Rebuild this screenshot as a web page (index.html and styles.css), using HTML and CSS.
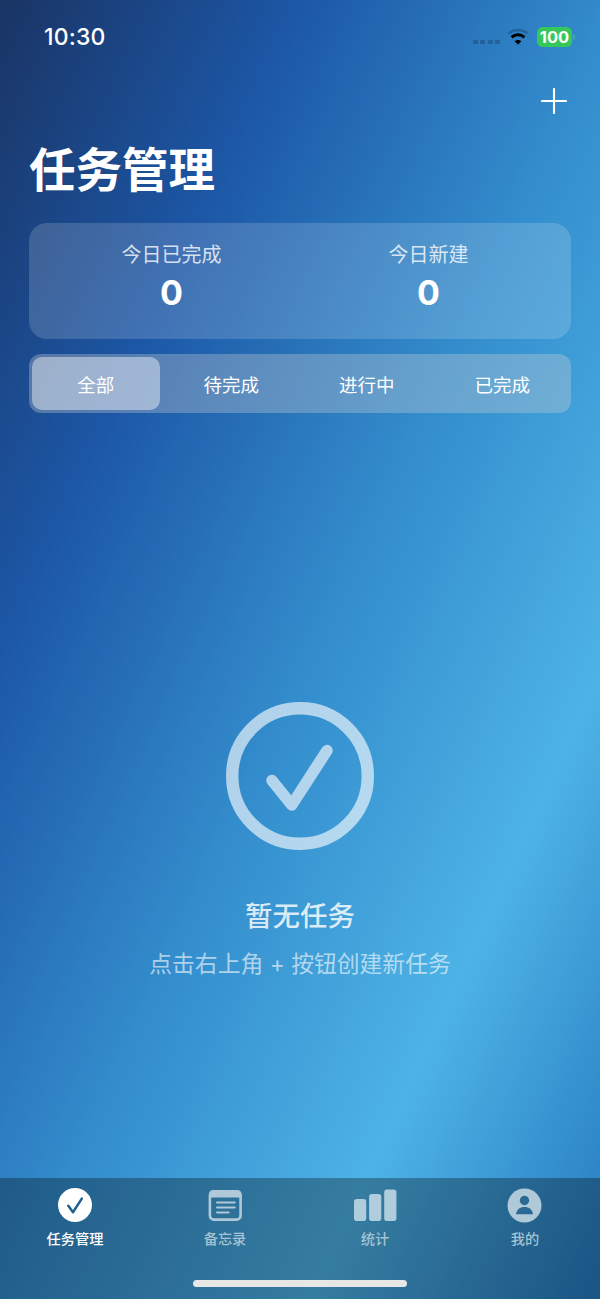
FILE: index.html
```
<!DOCTYPE html>
<html lang="zh-CN">
<head>
<meta charset="utf-8">
<title>任务管理</title>
<link rel="stylesheet" href="styles.css">
</head>
<body>
<div class="screen">
  <header class="status">
    <span class="time">10:30</span>
    <div class="indicators">
      <span class="cell"><i></i><i></i><i></i><i></i></span>
      <svg class="wifi" width="22" height="18" viewBox="0 0 22 18" fill="none">
        <path d="M1.500 5.400C7 .8 15 .8 20.500 5.400" stroke="#24649f" stroke-width="2.600"/>
        <path d="M4.600 9.300C8.200 5.900 13.800 5.900 17.400 9.300" stroke="#000" stroke-width="3"/>
        <path d="M11 16.500L7.600 13.200C9.500 11.500 12.500 11.500 14.400 13.200Z" fill="#000"/>
      </svg>
      <span class="battery">100</span><span class="battery-tip"></span>
    </div>
  </header>
  <div class="toolbar">
    <svg width="26" height="26" viewBox="0 0 26 26"><path d="M13 1v24M1 13h24" stroke="#fff" stroke-width="2.100" stroke-linecap="round"/></svg>
  </div>
  <h1 class="title">任务管理</h1>
  <section class="stats">
    <div class="stat"><span class="stat-label">今日已完成</span><strong class="stat-value">0</strong></div>
    <div class="stat"><span class="stat-label">今日新建</span><strong class="stat-value">0</strong></div>
  </section>
  <nav class="segments">
    <span class="segment active">全部</span>
    <span class="segment">待完成</span>
    <span class="segment">进行中</span>
    <span class="segment">已完成</span>
  </nav>
  <main class="empty">
    <svg width="148" height="148" viewBox="0 0 148 148" fill="none">
      <g stroke="#fff" stroke-opacity=".62">
        <circle cx="74" cy="74" r="67.800" stroke-width="12.400"/>
        <path d="M46 78.500L65.800 103L101 48.500" stroke-width="11.500" stroke-linecap="round" stroke-linejoin="round"/>
      </g>
    </svg>
    <h2 class="empty-title">暂无任务</h2>
    <p class="empty-hint">点击右上角 + 按钮创建新任务</p>
  </main>
  <footer class="tabs">
    <div class="tab-row">
      <div class="tab selected">
        <svg width="44" height="36" viewBox="0 0 44 36"><circle cx="22" cy="18" r="17" fill="#fff"/><path d="M15.300 18.800L20 25.200L28.800 11.600" fill="none" stroke="#23618f" stroke-width="2.500" stroke-linecap="round" stroke-linejoin="round"/></svg>
        <span>任务管理</span>
      </div>
      <div class="tab">
        <svg width="44" height="36" viewBox="0 0 44 36" fill="none" stroke="#afc9d9"><rect x="6.900" y="4.400" width="30.700" height="28.200" rx="4" stroke-width="2.600"/><path d="M6 12V7.500Q6 3 10.500 3H34Q38.500 3 38.500 7.500V12Q37.500 10.500 35.500 10.500H9Q7 10.500 6 12Z" fill="#afc9d9" stroke="none"/><path d="M14 15.600h17.700M14 20.600h17.700M14 25.400h11.700" stroke-width="2" stroke-linecap="round"/></svg>
        <span>备忘录</span>
      </div>
      <div class="tab">
        <svg width="44" height="36" viewBox="0 0 44 36" fill="#afcddc"><rect x="1" y="12" width="12.200" height="22" rx="2.800"/><rect x="16.100" y="7" width="12.200" height="27" rx="2.800"/><rect x="31.200" y="2.500" width="12.200" height="31.500" rx="2.800"/></svg>
        <span>统计</span>
      </div>
      <div class="tab">
        <svg width="44" height="36" viewBox="0 0 44 36"><circle cx="21.500" cy="18.500" r="17" fill="#afc9d9"/><circle cx="21.500" cy="13.500" r="4.700" fill="#296993"/><path d="M13 27.300C13.500 22.500 17 20 21.500 20S29.500 22.500 30 27.300Z" fill="#296993"/></svg>
        <span>我的</span>
      </div>
    </div>
    <div class="home-bar"></div>
  </footer>
</div>
</body>
</html>
```
FILE: styles.css
```
* { box-sizing: border-box; }
body { margin: 0; }
.screen {
  width: 600px;
  height: 1299px;
  display: flex;
  flex-direction: column;
  overflow: hidden;
  color: #fff;
  font-family: Inter, "Noto Sans CJK SC", sans-serif;
  background: linear-gradient(to bottom right, #1a3464 0%, #1c57a6 25%, #338ccc 51%, #4db3e6 76%, #267abf 100%);
}
.status {
  height: 73px;
  padding: 0 25px 0 44px;
  display: flex;
  align-items: center;
  justify-content: space-between;
}
.time { font-size: 23px; font-weight: 500; line-height: 30px; letter-spacing: .2px; }
.indicators { display: flex; align-items: center; }
.cell { display: flex; gap: 2.500px; margin: 11px 7px 0 0; }
.cell i { width: 5px; height: 4.500px; border-radius: 1px; background: #255f9c; }
.wifi { margin-right: 8px; }
.battery {
  width: 35px;
  height: 20px;
  border-radius: 5.500px;
  background: #35c759;
  font-size: 16.500px;
  font-weight: 700;
  line-height: 20px;
  text-align: center;
}
.battery-tip { width: 2px; height: 6px; margin-left: 1px; border-radius: 0 2px 2px 0; background: #3eaea5; }
.toolbar { height: 54px; padding: 15px 33px 0 0; display: flex; align-items: flex-start; justify-content: flex-end; }
.title { height: 96px; margin: 0; padding: 13px 0 0 29px; font-size: 46.500px; line-height: 60px; font-weight: 700; }
.stats {
  height: 116px;
  margin: 0 29px;
  padding: 18px 14px 0;
  display: flex;
  border-radius: 18px;
  background: rgba(255, 255, 255, .16);
}
.stat { flex: 1; display: flex; flex-direction: column; align-items: center; }
.stat-label { font-size: 20px; line-height: 28px; color: rgba(255, 255, 255, .8); }
.stat-value { font-size: 34px; line-height: 48px; font-weight: 700; }
.segments {
  height: 59px;
  margin: 15px 29px 0;
  padding: 3px 5px 3px 3px;
  display: grid;
  grid-template-columns: repeat(4, 127.500px);
  justify-content: space-between;
  border-radius: 12px;
  background: rgba(208, 208, 208, .33);
}
.segment { display: flex; align-items: center; justify-content: center; border-radius: 10px; font-size: 18.500px; }
.segment.active { background: rgba(255, 255, 255, .42); }
.empty { flex: 1; padding-top: 288.500px; display: flex; flex-direction: column; align-items: center; }
.empty-title { margin: 46px 0 0; font-size: 27.500px; line-height: 40px; font-weight: 500; color: rgba(255, 255, 255, .82); }
.empty-hint { margin: 12px 0 0; font-size: 22.800px; line-height: 32px; color: rgba(255, 255, 255, .6); white-space: nowrap; }
.tabs { height: 121px; padding-top: 9px; display: flex; flex-direction: column; align-items: center; background: rgba(0, 0, 0, .3); }
.tab-row { width: 100%; display: grid; grid-template-columns: repeat(4, 1fr); }
.tab { display: flex; flex-direction: column; align-items: center; color: #a6c3d4; font-size: 14.200px; line-height: 20px; font-weight: 500; }
.tab span { margin-top: 6px; }
.tab.selected { color: #fff; }
.home-bar { width: 214px; height: 7px; flex-shrink: 0; margin-top: 31px; border-radius: 4px; background: #e7e7e5; }
```
